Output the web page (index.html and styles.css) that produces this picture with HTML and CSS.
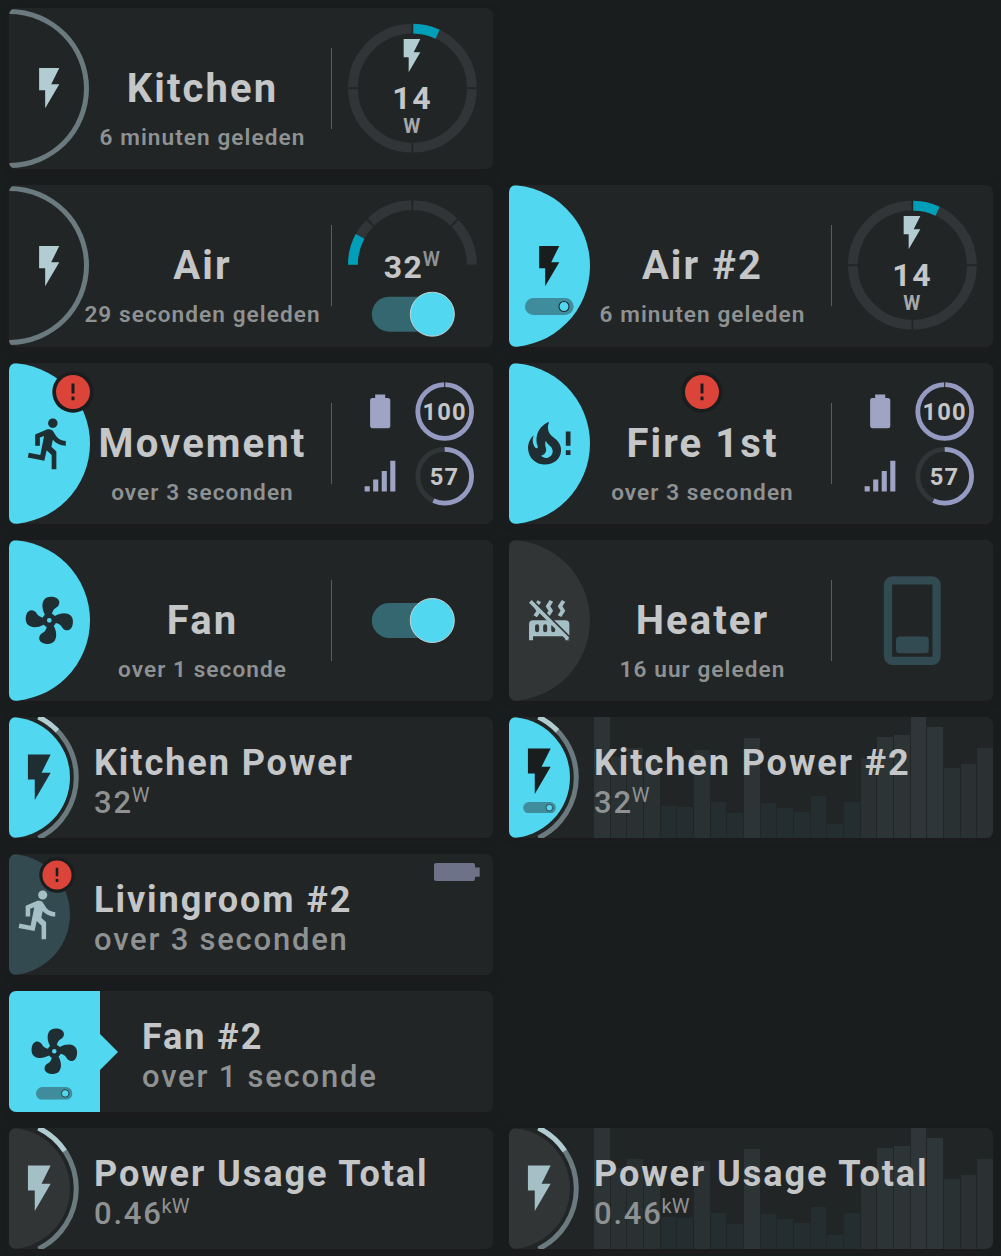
FILE: index.html
```html
<!DOCTYPE html>
<html lang="nl">
<head>
<meta charset="utf-8">
<title>Dashboard</title>
<link rel="stylesheet" href="styles.css">
</head>
<body>
<svg class="defs" width="0" height="0" aria-hidden="true">
  <symbol id="flash" viewBox="0 0 24 24"><path d="M7,2V13H10V22L17,10H13L17,2H7Z"/></symbol>
  <symbol id="run" viewBox="0 0 24 24"><path d="M13.5,5.5C14.59,5.5 15.5,4.58 15.5,3.5C15.5,2.38 14.59,1.5 13.5,1.5C12.39,1.5 11.5,2.38 11.5,3.5C11.5,4.58 12.39,5.5 13.5,5.5M9.89,19.38L10.89,15L13,17V23H15V15.5L12.89,13.5L13.5,10.5C14.79,12 16.79,13 19,13V11C17.09,11 15.5,10 14.69,8.58L13.69,7C13.29,6.38 12.69,6 12,6C11.69,6 11.5,6.08 11.19,6.08L6,8.28V13H8V9.58L9.79,8.88L8.19,17L3.29,16L2.89,18L9.89,19.38Z"/></symbol>
  <symbol id="fire" viewBox="0 0 24 24"><path transform="translate(-2 0)" d="M17.66 11.2C17.43 10.9 17.15 10.64 16.89 10.38C16.22 9.78 15.46 9.35 14.82 8.72C13.33 7.26 13 4.85 13.95 3C13 3.23 12.17 3.75 11.46 4.32C8.87 6.4 7.85 10.07 9.07 13.22C9.11 13.32 9.15 13.42 9.15 13.55C9.15 13.77 9 13.97 8.8 14.05C8.57 14.15 8.33 14.09 8.14 13.93C8.08 13.88 8.04 13.83 8 13.76C6.87 12.33 6.69 10.28 7.45 8.64C5.78 10 4.87 12.3 5 14.47C5.06 14.97 5.12 15.47 5.29 15.97C5.43 16.57 5.7 17.17 6 17.7C7.08 19.43 8.95 20.67 10.96 20.92C13.1 21.19 15.39 20.8 17.03 19.32C18.86 17.66 19.5 15 18.56 12.72L18.43 12.46C18.22 12 17.66 11.2 17.66 11.2M14.5 17.5C14.22 17.74 13.76 18 13.4 18.1C12.28 18.5 11.16 17.94 10.5 17.28C11.69 17 12.4 16.12 12.61 15.23C12.78 14.43 12.46 13.77 12.33 13C12.21 12.26 12.23 11.63 12.5 10.94C12.69 11.32 12.89 11.7 13.13 12C13.9 13 15.11 13.44 15.37 14.8C15.41 14.94 15.43 15.08 15.43 15.23C15.46 16.05 15.1 16.95 14.5 17.5Z"/><path d="M19 7H21V13H19ZM19 15H21V17H19Z"/></symbol>
  <symbol id="fan" viewBox="0 0 24 24"><path d="M12,11A1,1 0 0,0 11,12A1,1 0 0,0 12,13A1,1 0 0,0 13,12A1,1 0 0,0 12,11M12.5,2C17,2 17.11,5.57 14.75,6.75C13.76,7.24 13.32,8.29 13.13,9.22C13.61,9.42 14.03,9.73 14.35,10.13C18.05,8.13 22.03,8.92 22.03,12.5C22.03,17 18.46,17.1 17.28,14.73C16.78,13.74 15.72,13.3 14.79,13.11C14.59,13.59 14.28,14 13.88,14.34C15.87,18.03 15.08,22 11.5,22C7,22 6.91,18.42 9.27,17.24C10.25,16.75 10.69,15.71 10.89,14.79C10.4,14.59 9.97,14.27 9.65,13.87C5.96,15.85 2,15.07 2,11.5C2,7 5.56,6.89 6.74,9.26C7.24,10.25 8.29,10.68 9.22,10.87C9.41,10.39 9.73,9.97 10.14,9.65C8.15,5.96 8.94,2 12.5,2Z"/></symbol>
  <mask id="slash-gap"><rect width="24" height="24" fill="#fff"/><path d="M2.6 .6L23.4 21.4L21.3 21.3L2.6 2.6Z" fill="#000" stroke="#000" stroke-width=".6"/></mask>
  <symbol id="radiator-off" viewBox="0 0 24 24"><path mask="url(#slash-gap)" fill-rule="evenodd" d="M7.95,3L6.53,5.19L7.95,7.4H7.94L5.95,10.5L4.22,9.6L5.64,7.39L4.22,5.19L6.22,2.09L7.95,3M13.95,2.89L12.53,5.1L13.95,7.3L13.94,7.31L11.95,10.4L10.22,9.5L11.64,7.3L10.22,5.1L12.22,2L13.95,2.89M20,2.89L18.56,5.1L20,7.3V7.31L18,10.4L16.25,9.5L17.67,7.3L16.25,5.1L18.25,2L20,2.89M2,22V14A2,2 0 0,1 4,12H20A2,2 0 0,1 22,14V22H20V20H4V22H2M6,14A1,1 0 0,0 5,15V17A1,1 0 0,0 6,18A1,1 0 0,0 7,17V15A1,1 0 0,0 6,14M10,14A1,1 0 0,0 9,15V17A1,1 0 0,0 10,18A1,1 0 0,0 11,17V15A1,1 0 0,0 10,14M14,14A1,1 0 0,0 13,15V17A1,1 0 0,0 14,18A1,1 0 0,0 15,17V15A1,1 0 0,0 14,14Z"/><path d="M3.3 2L2 3.3L20.7 22L22 20.7Z"/></symbol>
  <symbol id="battery" viewBox="0 0 24 24"><path d="M16.67,4H15V2H9V4H7.33A1.33,1.33 0 0,0 6,5.33V20.67C6,21.4 6.6,22 7.33,22H16.67A1.33,1.33 0 0,0 18,20.67V5.33C18,4.6 17.4,4 16.67,4Z"/></symbol>
  <symbol id="signal" viewBox="0 0 24 24"><path d="M3,21H6V18H3M8,21H11V14H8M13,21H16V9H13M18,21H21V3H18V21Z"/></symbol>
  <symbol id="alert" viewBox="-21 -21 42 42"><circle r="20.7" fill="#191d1e"/><circle r="17" fill="#dc4439"/><path fill="#191d1e" d="M-1.5-8.4h3V1.6h-3zM-1.5 4.6h3V8.2h-3z"/></symbol>
  <symbol id="mini-switch" viewBox="0 0 49 17"><rect width="48.6" height="17" rx="8.5" fill="#3f8c9d"/><circle cx="39" cy="8.5" r="5" fill="#51d7f0" stroke="#1f2a2e" stroke-width="1.1"/></symbol>
  <symbol id="switch" viewBox="0 0 84 46"><rect x=".5" y="5.5" width="78" height="35" rx="17.5" fill="#346770"/><circle cx="61" cy="23" r="22" fill="#51d7f0" stroke="#c3d5d9"/></symbol>
  <symbol id="watts" viewBox="0 0 161 161">
    <circle cx="80.4" cy="80.2" r="59.5" pathLength="360" class="track" stroke-dasharray="88.2 1.8" stroke-dashoffset="-.9"/>
    <circle cx="80.4" cy="80.2" r="59.5" pathLength="360" class="level" stroke-dasharray="24.2 335.8" stroke-dashoffset="-.9" transform="rotate(-90 80.4 80.2)"/>
    <use href="#flash" x="60" y="27.6" width="40" height="40" fill="#b2cdd2"/>
  </symbol>
  <symbol id="sensors" viewBox="0 0 161 161">
    <g fill="#9fa3c4"><use href="#battery" x="28" y="28.2" width="40.4" height="40.4"/><use href="#signal" x="27.5" y="92.6" width="41" height="41"/></g>
    <circle cx="112.7" cy="48.5" r="26.9" pathLength="360" class="ring" stroke-dasharray="357.5 2.5" stroke-dashoffset="-1.25" transform="rotate(-90 112.7 48.5)"/>
    <circle cx="112.7" cy="113.3" r="26.9" class="ring dim"/>
    <circle cx="112.7" cy="113.3" r="26.9" pathLength="360" class="ring" stroke-dasharray="205 155" transform="rotate(-90 112.7 113.3)"/>
  </symbol>
</svg>

<main class="board">
  <section class="card large">
    <div class="badge outline"><svg class="icon"><use href="#flash"/></svg></div>
    <div class="info"><h2>Kitchen</h2><p>6 minuten geleden</p></div>
    <div class="rule"></div>
    <svg class="side"><use href="#watts"/><text x="80.2" y="100.8" class="num">14</text><text x="79.8" y="124.9" class="unit">W</text></svg>
  </section>
  <div></div>

  <section class="card large">
    <div class="badge outline"><svg class="icon"><use href="#flash"/></svg></div>
    <div class="info"><h2>Air</h2><p>29 seconden geleden</p></div>
    <div class="rule"></div>
    <svg class="side">
      <path d="M20.9 79.7A59.5 59.5 0 0 1 139.9 79.7" pathLength="180" class="track" stroke-dasharray="44 2 43 2 43 2 44"/>
      <path d="M20.9 79.7A59.5 59.5 0 0 1 139.9 79.7" pathLength="180" class="level" stroke-dasharray="28.4 200"/>
      <text x="71.6" y="92.5" class="num">32</text><text x="99.4" y="80.6" class="unit raised">W</text>
      <use href="#switch" x="39.3" y="106.2" width="84" height="46"/>
    </svg>
  </section>
  <section class="card large">
    <div class="badge on"><svg class="icon deep"><use href="#flash"/></svg><svg class="mini"><use href="#mini-switch"/></svg></div>
    <div class="info"><h2>Air #2</h2><p>6 minuten geleden</p></div>
    <div class="rule"></div>
    <svg class="side"><use href="#watts"/><text x="80.2" y="100.8" class="num">14</text><text x="79.8" y="124.9" class="unit">W</text></svg>
  </section>

  <section class="card large">
    <div class="badge on"><svg class="icon wide"><use href="#run"/></svg></div>
    <div class="info"><h2>Movement</h2><p>over 3 seconden</p></div>
    <div class="rule"></div>
    <svg class="side"><use href="#sensors"/><text x="112.7" y="57" class="small">100</text><text x="112.5" y="122" class="small">57</text></svg>
    <svg class="alert"><use href="#alert"/></svg>
  </section>
  <section class="card large">
    <div class="badge on"><svg class="icon wide"><use href="#fire"/></svg></div>
    <div class="info"><h2>Fire 1st</h2><p>over 3 seconden</p></div>
    <div class="rule"></div>
    <svg class="side"><use href="#sensors"/><text x="112.7" y="57" class="small">100</text><text x="112.5" y="122" class="small">57</text></svg>
    <svg class="alert middle"><use href="#alert"/></svg>
  </section>

  <section class="card large">
    <div class="badge on"><svg class="icon wide"><use href="#fan"/></svg></div>
    <div class="info"><h2>Fan</h2><p>over 1 seconde</p></div>
    <div class="rule"></div>
    <svg class="side"><use href="#switch" x="39.3" y="57.5" width="84" height="46"/></svg>
  </section>
  <section class="card large">
    <div class="badge off"><svg class="icon"><use href="#radiator-off"/></svg></div>
    <div class="info"><h2>Heater</h2><p>16 uur geleden</p></div>
    <div class="rule"></div>
    <svg class="side"><rect x="56" y="40.3" width="48.6" height="80.5" rx="4.5" fill="none" stroke="#324a51" stroke-width="8.2"/><rect x="64" y="96.6" width="32.8" height="16.6" rx="3.5" fill="#324a51"/></svg>
  </section>

  <section class="card small">
    <div class="badge on"><svg class="icon"><use href="#flash"/></svg></div>
    <svg class="orbit"><path d="M29.5 .02A67.3 67.3 0 0 1 29.5 120.98" class="orbit-track"/><path d="M29.5 .02A67.3 67.3 0 0 1 48.4 13.75" class="orbit-level"/></svg>
    <div class="info"><h2>Kitchen Power</h2><p>32<span>W</span></p></div>
  </section>
  <section class="card small">
    <div class="bars">
      <i class="c" style="height:121px"></i><i class="b" style="height:81px"></i><i class="b" style="height:90px"></i><i class="b" style="height:78px"></i><i class="a" style="height:32px"></i><i class="a" style="height:31px"></i><i class="b" style="height:88px"></i><i class="a" style="height:36px"></i><i class="a" style="height:25px"></i><i class="c" style="height:100px"></i><i class="a" style="height:35px"></i><i class="a" style="height:30px"></i><i class="a" style="height:26px"></i><i class="a" style="height:42px"></i><i class="a" style="height:14px"></i><i class="a" style="height:36px"></i><i class="b" style="height:80px"></i><i class="c" style="height:101px"></i><i class="c" style="height:103px"></i><i class="d" style="height:121px"></i><i class="d" style="height:111px"></i><i class="b" style="height:70px"></i><i class="b" style="height:74px"></i><i class="b" style="height:90px"></i>
    </div>
    <div class="badge on"><svg class="icon deep lift"><use href="#flash"/></svg><svg class="mini"><use href="#mini-switch"/></svg></div>
    <svg class="orbit"><path d="M29.5 .02A67.3 67.3 0 0 1 29.5 120.98" class="orbit-track"/><path d="M29.5 .02A67.3 67.3 0 0 1 48.4 13.75" class="orbit-level"/></svg>
    <div class="info"><h2>Kitchen Power #2</h2><p>32<span>W</span></p></div>
  </section>

  <section class="card small">
    <div class="badge muted"><svg class="icon"><use href="#run"/></svg></div>
    <div class="info"><h2>Livingroom #2</h2><p>over 3 seconden</p></div>
    <svg class="alert"><use href="#alert"/></svg>
    <svg class="cell" viewBox="0 0 46 18"><path fill="#6e7288" d="M2 0H39Q41 0 41 2V4.6H45.7V13.8H41V16Q41 18 39 18H2Q0 18 0 16V2Q0 0 2 0Z"/></svg>
  </section>
  <div></div>

  <section class="card small">
    <div class="flag"><svg class="icon"><use href="#fan"/></svg><svg class="mini"><use href="#mini-switch"/></svg></div>
    <svg class="tip" viewBox="0 0 18 36"><path d="M0 0L18 18L0 36Z" fill="#51d7f0"/></svg>
    <div class="info"><h2>Fan #2</h2><p>over 1 seconde</p></div>
  </section>
  <div></div>

  <section class="card small">
    <div class="badge off"><svg class="icon"><use href="#flash"/></svg></div>
    <svg class="orbit"><path d="M29.5 .02A67.3 67.3 0 0 1 29.5 120.98" class="orbit-track"/><path d="M29.5 .02A67.3 67.3 0 0 1 55.8 22.9" class="orbit-level"/></svg>
    <div class="info"><h2>Power Usage Total</h2><p>0.46<span>kW</span></p></div>
  </section>
  <section class="card small">
    <div class="bars">
      <i class="c" style="height:121px"></i><i class="b" style="height:81px"></i><i class="b" style="height:90px"></i><i class="b" style="height:78px"></i><i class="a" style="height:32px"></i><i class="a" style="height:31px"></i><i class="b" style="height:88px"></i><i class="a" style="height:36px"></i><i class="a" style="height:25px"></i><i class="c" style="height:100px"></i><i class="a" style="height:35px"></i><i class="a" style="height:30px"></i><i class="a" style="height:26px"></i><i class="a" style="height:42px"></i><i class="a" style="height:14px"></i><i class="a" style="height:36px"></i><i class="b" style="height:80px"></i><i class="c" style="height:101px"></i><i class="c" style="height:103px"></i><i class="d" style="height:121px"></i><i class="d" style="height:111px"></i><i class="b" style="height:70px"></i><i class="b" style="height:74px"></i><i class="b" style="height:90px"></i>
    </div>
    <div class="badge off"><svg class="icon"><use href="#flash"/></svg></div>
    <svg class="orbit"><path d="M29.5 .02A67.3 67.3 0 0 1 29.5 120.98" class="orbit-track"/><path d="M29.5 .02A67.3 67.3 0 0 1 55.8 22.9" class="orbit-level"/></svg>
    <div class="info"><h2>Power Usage Total</h2><p>0.46<span>kW</span></p></div>
  </section>
</main>
</body>
</html>
```
FILE: styles.css
```css
* { box-sizing: border-box; }
html { background: #191d1e; }
body { margin: 0; height: 1256px; overflow: hidden; font-family: Roboto, "Liberation Sans", sans-serif; color: #c4c6c7; }
svg { display: block; flex: none; }
.defs { position: absolute; }

.board {
  display: grid;
  grid-template-columns: 484px 484px;
  grid-auto-rows: auto;
  gap: 16px;
  padding: 8px 8px 0 9px;
}

.card {
  position: relative;
  display: grid;
  overflow: hidden;
  border-radius: 7px;
  background: #222526;
  box-shadow: 0 2px 5px 2px #1c1c1e;
}
.card.large { height: 161.25px; grid-template-columns: 81px 224px 18px 161px; }
.card.small { height: 121px; grid-template-columns: 85px 1fr; }

.badge { position: relative; color: #1f2e33; }
.large .badge { width: 80.7px; height: 161.25px; border-radius: 0 80.7px 80.7px 0; }
.small .badge { width: 60.5px; height: 121px; border-radius: 0 60.5px 60.5px 0; grid-area: 1 / 1; }
.badge, .flag { display: grid; place-items: center; fill: currentColor; }
.badge > *, .flag > * { grid-area: 1 / 1; }
.on { background: #51d7f0; }
.off { background: #313536; color: #a5bfc6; }
.muted { background: #334a50; color: #a5bfc6; }
.large .outline {
  height: 159.4px;
  width: 79.7px;
  margin-top: .8px;
  border: 5px solid #6a7a7e;
  border-left: 0;
  color: #b2cdd2;
}
.large .outline .icon { margin-left: 5px; }
.icon { width: 48.4px; height: 48.4px; }
.icon.wide { width: 56.6px; height: 56.6px; }
.icon.deep { color: #191d1e; fill: #191d1e; }
.small .icon { width: 54.6px; height: 54.6px; }
.small .icon.lift { margin-bottom: 12px; }
.mini { width: 49px; height: 17px; margin-top: 81px; }
.small .mini { width: 33.3px; height: 11.4px; margin-top: 60px; }

.info { min-width: 0; display: flex; flex-direction: column; white-space: nowrap; }
.large .info { align-items: center; padding-top: 57.2px; padding-left: 1px; }
.small .info { grid-area: 1 / 2; padding-top: 25px; position: relative; }
h2, p { margin: 0; letter-spacing: .052em; }
h2 { font-weight: 700; font-size: 40px; line-height: 48px; }
p { font-weight: 600; font-size: 22.6px; line-height: 28px; color: #8f9293; margin-top: 11px; letter-spacing: .047em; }
.small h2 { font-size: 36.1px; line-height: 42px; letter-spacing: .053em; }
.small p { font-size: 31px; font-weight: 500; line-height: 36px; margin-top: .6px; letter-spacing: .057em; }
.small p span { font-size: 20px; font-weight: 400; letter-spacing: 0; line-height: 0; vertical-align: 10.5px; margin-left: -1px; }

.rule { width: 1px; height: 81px; background: #5a5d5e; justify-self: end; align-self: center; }
.side { width: 161px; height: 161px; overflow: visible; }
.track, .level { fill: none; stroke-width: 9.8; stroke: #313537; }
.level { stroke: #009fb9; }
.ring { fill: none; stroke: #949ac2; stroke-width: 4.8; }
.ring.dim { stroke: #313537; }
text { fill: #c4c6c7; font-weight: 700; letter-spacing: .05em; text-anchor: middle; }
.num { font-size: 32px; }
.unit { font-size: 19.5px; fill: #a5a7a8; letter-spacing: 0; }
.raised { fill: #8f9293; font-weight: 600; }
text.small { font-size: 23.7px; }

.alert { position: absolute; left: 43.3px; top: 8.6px; width: 42px; height: 42px; }
.alert.middle { left: 172.4px; }
.small .alert { left: 30.3px; top: 3.3px; width: 36px; height: 36px; }

.orbit { grid-area: 1 / 1; width: 85px; height: 121px; }
.orbit path { fill: none; stroke: #6a7a7e; stroke-width: 5; }
.orbit path.orbit-level { stroke: #b2cdd2; }

.cell { position: absolute; right: 13.3px; top: 9px; width: 46px; height: 18px; }

.small:has(.flag) { grid-template-columns: 91px 42px 1fr; }
.small:has(.flag) .info { grid-column: 3; }
.flag { width: 91px; height: 121px; background: #51d7f0; color: #1f2e33; }
.small .flag .mini { width: 36.7px; height: 12.8px; margin-top: 84px; }
.tip { width: 18px; height: 36px; align-self: center; }

.bars {
  grid-area: 1 / 2;
  display: grid;
  grid-template-columns: repeat(24, 1fr);
  column-gap: 1px;
  align-items: end;
  height: 121px;
}
.bars .a { background: #242d2f; }
.bars .b { background: #293133; }
.bars .c { background: #2c3436; }
.bars .d { background: #2e3639; }
```
